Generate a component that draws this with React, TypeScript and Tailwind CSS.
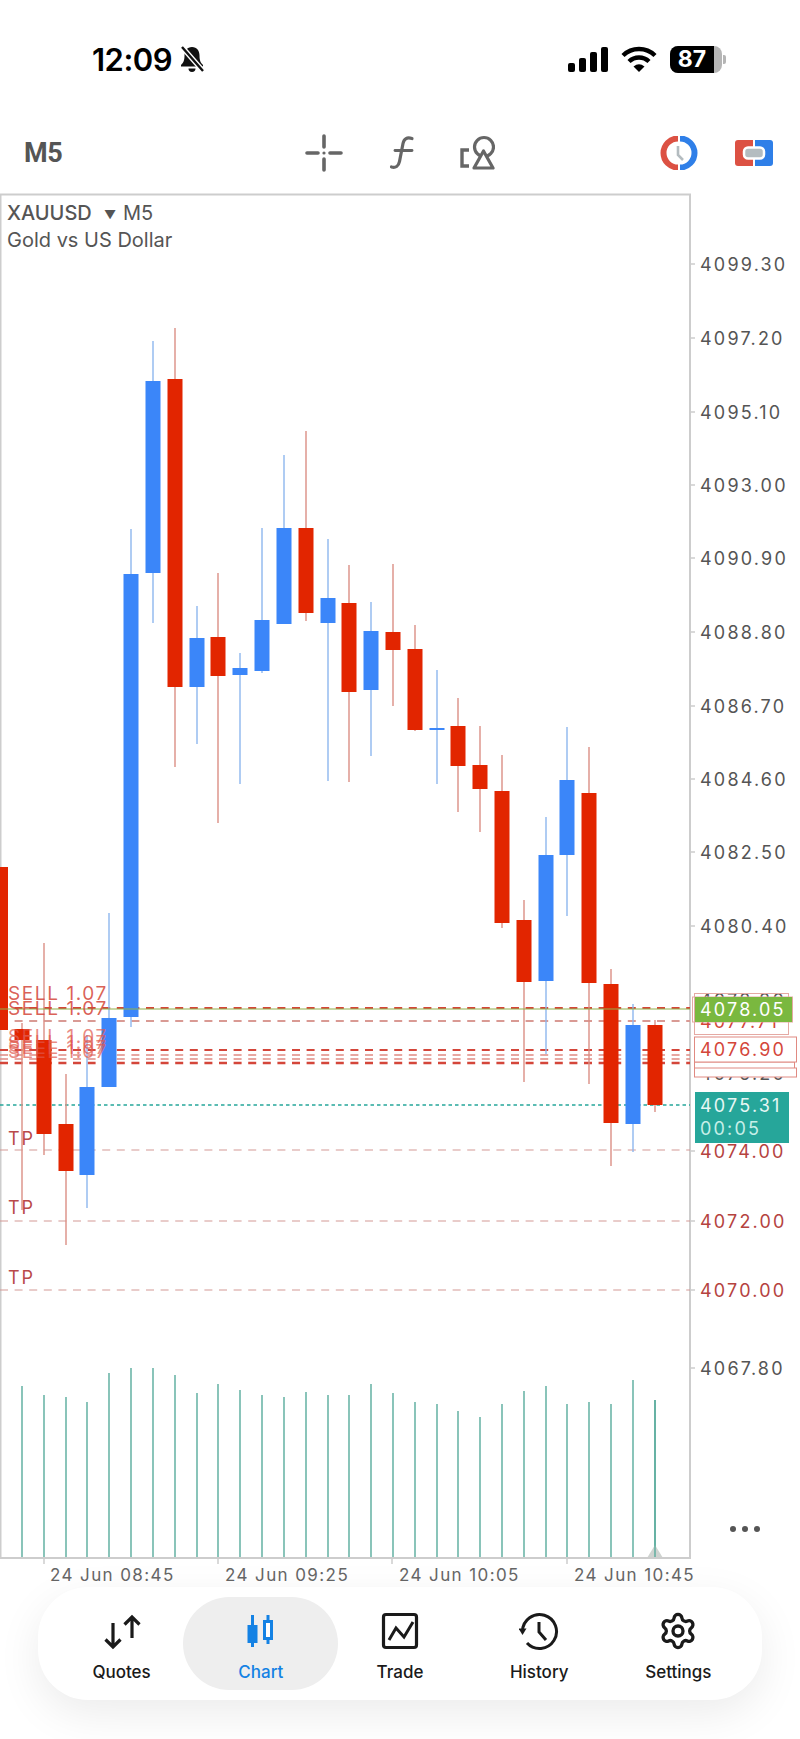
import { Settings } from 'lucide-react';

// x, wick top, wick bottom, body top, body bottom, up candle?
const candles: [number, number, number, number, number, boolean][] = [
  [1, 867, 1030, 867, 1030, false],
  [22, 1023, 1210, 1029, 1040, false],
  [44, 943, 1155, 1040, 1134, false],
  [66, 1074, 1245, 1124, 1171, false],
  [87, 1035, 1208, 1087, 1175, true],
  [109, 913, 1087, 1018, 1087, true],
  [131, 529, 1027, 574, 1017, true],
  [153, 341, 623, 381, 573, true],
  [175, 328, 767, 379, 687, false],
  [197, 606, 744, 638, 687, true],
  [218, 573, 823, 637, 676, false],
  [240, 653, 784, 668, 675, true],
  [262, 528, 673, 620, 671, true],
  [284, 455, 624, 528, 624, true],
  [306, 431, 621, 528, 613, false],
  [328, 539, 781, 598, 623, true],
  [349, 565, 782, 603, 692, false],
  [371, 602, 756, 631, 690, true],
  [393, 564, 706, 632, 650, false],
  [415, 625, 731, 649, 730, false],
  [437, 670, 784, 728, 730, true],
  [458, 698, 812, 726, 766, false],
  [480, 726, 832, 765, 789, false],
  [502, 755, 928, 791, 923, false],
  [524, 900, 1082, 920, 982, false],
  [546, 817, 1054, 855, 981, true],
  [567, 727, 916, 780, 855, true],
  [589, 747, 1084, 793, 983, false],
  [611, 969, 1166, 984, 1123, false],
  [633, 1004, 1152, 1025, 1124, true],
  [655, 1020, 1112, 1025, 1105, false],
];

const volumes: [number, number][] = [
  [22, 1386], [44, 1395], [66, 1397], [87, 1402], [109, 1373], [131, 1368], [153, 1368], [175, 1375],
  [197, 1393], [218, 1384], [240, 1390], [262, 1395], [284, 1397], [306, 1392], [328, 1395], [349, 1395],
  [371, 1384], [393, 1393], [415, 1402], [437, 1404], [458, 1411], [480, 1417], [502, 1404], [524, 1391],
  [546, 1386], [567, 1404], [589, 1402], [611, 1404], [633, 1380], [655, 1400],
];

const priceLabels: [string, number][] = [
  ['4099.30', 264], ['4097.20', 338], ['4095.10', 412], ['4093.00', 485], ['4090.90', 558],
  ['4088.80', 632], ['4086.70', 706], ['4084.60', 779], ['4082.50', 852], ['4080.40', 926], ['4067.80', 1368],
];

const timeLabels: [string, number, number][] = [
  ['24 Jun 08:45', 44, 50], ['24 Jun 09:25', 218, 225], ['24 Jun 10:05', 392, 399], ['24 Jun 10:45', 567, 574],
];

function Chart() {
  return (
    <svg viewBox="0 190 800 1397" className="block w-[800px] h-[1397px] shrink-0 font-['Inter',sans-serif]">
      {/* volumes */}
      {volumes.map(([x, y]) => (
        <line key={x} x1={x} x2={x} y1={y} y2={1558} stroke="#58ab9c" strokeWidth="1.4" />
      ))}
      <polygon points="647,1558 655,1545 663,1558" fill="#cfd3d0" />
      <line x1={655} x2={655} y1={1400} y2={1558} stroke="#58ab9c" strokeWidth="1.4" />

      {/* frame and ticks */}
      <path d="M0.5 1558 V194.5 H690 V1558 H0" fill="none" stroke="#cdcdcd" strokeWidth="2" />
      {priceLabels.map(([, y]) => (
        <line key={y} x1={690} x2={695} y1={y} y2={y} stroke="#cdcdcd" strokeWidth="1.5" />
      ))}
      {timeLabels.map(([, x]) => (
        <line key={x} x1={x} x2={x} y1={1558} y2={1564} stroke="#cdcdcd" strokeWidth="1.5" />
      ))}

      {/* order lines */}
      <line x1={0} x2={690} y1={1008} y2={1008} stroke="#d4463a" strokeWidth="2" strokeDasharray="8 6.6" />
      <line x1={0} x2={690} y1={1021} y2={1021} stroke="#d99a94" strokeWidth="2" strokeDasharray="8 6.6" />
      <line x1={0} x2={690} y1={1050} y2={1050} stroke="#d4463a" strokeWidth="2" strokeDasharray="8 6.6" />
      <line x1={0} x2={690} y1={1055} y2={1055} stroke="#e08a82" strokeWidth="1.6" strokeDasharray="8 6.6" />
      <line x1={0} x2={690} y1={1059} y2={1059} stroke="#e08a82" strokeWidth="1.6" strokeDasharray="8 6.6" />
      <line x1={0} x2={690} y1={1063} y2={1063} stroke="#d4463a" strokeWidth="2.4" strokeDasharray="8 6.6" />
      <line x1={0} x2={690} y1={1105} y2={1105} stroke="#26a69a" strokeWidth="1.6" strokeDasharray="3.5 3" />
      <line x1={0} x2={690} y1={1150} y2={1150} stroke="#d49a96" strokeWidth="1.2" strokeDasharray="8 6.6" />
      <line x1={0} x2={690} y1={1221} y2={1221} stroke="#d49a96" strokeWidth="1.2" strokeDasharray="8 6.6" />
      <line x1={0} x2={690} y1={1290} y2={1290} stroke="#d49a96" strokeWidth="1.2" strokeDasharray="8 6.6" />

      {/* candles */}
      {candles.map(([x, wt, wb, bt, bb, up]) => (
        <g key={x}>
          <line x1={x} x2={x} y1={wt} y2={wb} stroke={up ? '#8db7ee' : '#db8f85'} strokeWidth="1.4" />
          <rect x={x === 1 ? 0 : x - 7.5} y={bt} width={x === 1 ? 8 : 15} height={bb - bt} fill={up ? '#3b86f9' : '#e22500'} />
        </g>
      ))}
      <line x1={0} x2={690} y1={1009} y2={1009} stroke="#8fb04a" strokeWidth="1.2" />

      {/* symbol */}
      <text x={7} y={220} fontSize="20" fontWeight="500" fill="#555555">XAUUSD</text>
      <text x={104} y={219} fontSize="12" fill="#555555">▼</text>
      <text x={123} y={220} fontSize="20" fill="#555555">M5</text>
      <text x={7} y={247} fontSize="20" fill="#555555">Gold vs US Dollar</text>

      {/* order labels */}
      {[1000, 1015].map((y) => (
        <text key={y} x={8} y={y} fontSize="19" fill="#d4463a" fillOpacity="0.85" className="tracking-[1.6px]">SELL 1.07</text>
      ))}
      {[1043, 1049, 1054, 1058].map((y) => (
        <text key={y} x={8} y={y} fontSize="19" fill="#e0574c" fillOpacity="0.7" className="tracking-[1.6px]">SELL 1.07</text>
      ))}
      {[1145, 1214, 1284].map((y) => (
        <text key={y} x={8} y={y} fontSize="18" fill="#b94a4a" className="tracking-[2px]">TP</text>
      ))}

      {/* price axis */}
      {priceLabels.map(([label, y]) => (
        <text key={label} x={700} y={y + 6.5} fontSize="18" fill="#555555" className="tracking-[2.2px]">{label}</text>
      ))}
      <text x={700} y={1006.5} fontSize="18" fill="#555555" className="tracking-[2.2px]">4078.80</text>
      <text x={700} y={1027.5} fontSize="18" fill="#d4463a" className="tracking-[2.2px]">4077.71</text>
      <rect x={694.5} y={993.5} width={94} height={41} fill="none" stroke="#e5a9a3" strokeWidth="1" />
      <rect x={692.5} y={997} width={100} height={25} fill="none" stroke="#e5a9a3" strokeWidth="1" />
      <rect x={695} y={997} width={97} height={25} fill="#7ab83f" />
      <text x={700} y={1016} fontSize="18" fill="#ffffff" className="tracking-[2.2px]">4078.05</text>

      <text x={700} y={1080} fontSize="18" fill="#555555" className="tracking-[2.2px]">4075.20</text>
      <rect x={694.5} y={1062} width={100} height={9} fill="#ffffff" stroke="#e08a82" strokeWidth="1" />
      <rect x={694.5} y={1068} width={102} height={9} fill="#ffffff" stroke="#e08a82" strokeWidth="1" />
      <rect x={694.5} y={1037} width={102} height={25} fill="#ffffff" stroke="#e08a82" strokeWidth="1" />
      <text x={700} y={1056} fontSize="18" fill="#d4463a" className="tracking-[2.2px]">4076.90</text>

      <rect x={695} y={1092} width={94} height={51} fill="#26a69a" />
      <text x={700} y={1111.5} fontSize="18" fill="#e6f7f4" className="tracking-[2.2px]">4075.31</text>
      <text x={700} y={1134.5} fontSize="18" fill="#c6efe8" className="tracking-[2.2px]">00:05</text>

      {[['4074.00', 1151], ['4072.00', 1221], ['4070.00', 1290]].map(([label, y]) => (
        <g key={label}>
          <line x1={690} x2={695} y1={y} y2={y} stroke="#cdcdcd" strokeWidth="1.5" />
          <text x={700} y={Number(y) + 6.5} fontSize="18" fill="#b5433f" className="tracking-[2.2px]">{label}</text>
        </g>
      ))}

      {/* time axis */}
      {timeLabels.map(([label, tick, x]) => (
        <text key={tick} x={x} y={1581} fontSize="17" fill="#666666" className="tracking-[1.4px]">{label}</text>
      ))}

      <circle cx={733} cy={1529} r={3} fill="#555555" />
      <circle cx={745} cy={1529} r={3} fill="#555555" />
      <circle cx={757} cy={1529} r={3} fill="#555555" />
    </svg>
  );
}

function StatusBar() {
  return (
    <div className="flex h-[116px] shrink-0 pt-[42px] pl-[92px] pr-[74px] justify-between items-start">
      <div className="flex items-center h-[34px] gap-[6px]">
        <span className="text-[31px] leading-none font-semibold text-black tracking-[-0.5px]">12:09</span>
        <svg width="28" height="28" viewBox="0 0 28 28">
          <path d="M14 2c-5 0-7.5 4-7.5 8.5 0 5-1 7-3.5 9.5v1.5h22V20c-2.500-2.500-3.500-4.500-3.500-9.500C21.500 6 19 2 14 2z" fill="#111" />
          <path d="M10.500 23.500h7a3.500 3.500 0 0 1-7 0z" fill="#111" />
          <path d="M4 2 L25 26" stroke="#fff" strokeWidth="5" />
          <path d="M4 2 L25 26" stroke="#111" strokeWidth="2.4" />
        </svg>
      </div>
      <div className="flex items-center gap-[13px] h-[34px]">
        <div className="flex items-end gap-[4px] h-[25px]">
          <div className="w-[7px] h-[9px] rounded-[2px] bg-black" />
          <div className="w-[7px] h-[14px] rounded-[2px] bg-black" />
          <div className="w-[7px] h-[20px] rounded-[2px] bg-black" />
          <div className="w-[7px] h-[25px] rounded-[2px] bg-black" />
        </div>
        <svg width="36" height="26" viewBox="0 0 36 26">
          <path d="M2 9.500A23 23 0 0 1 34 9.500" fill="none" stroke="#000" strokeWidth="4.400" />
          <path d="M8 15.500A14.500 14.500 0 0 1 28 15.500" fill="none" stroke="#000" strokeWidth="4.400" />
          <path d="M12.500 20.500Q18 16 23.500 20.500L18 26Z" fill="#000" />
        </svg>
        <div className="flex items-center">
          <div className="flex w-[52px] h-[27px] rounded-[8px] overflow-hidden bg-[#b5b5b5]">
            <div className="w-[44px] bg-black flex items-center justify-center text-white text-[23px] font-bold leading-none">87</div>
          </div>
          <div className="w-[3px] h-[9px] ml-[1px] rounded-r-[2px] bg-[#b5b5b5]" />
        </div>
      </div>
    </div>
  );
}

function Toolbar() {
  return (
    <div className="flex h-[74px] shrink-0 items-center pl-[24px] pr-[27px]">
      <span className="font-['Roboto',sans-serif] text-[27px] font-bold leading-none text-[#555555] w-[281px] tracking-[-0.5px]">M5</span>
      <svg width="38" height="38" viewBox="0 0 38 38" className="shrink-0">
        <g stroke="#666666" strokeWidth="3.600" strokeLinecap="round">
          <path d="M19 2v11M19 25v11M2 19h11M25 19h11" />
        </g>
        <circle cx="19" cy="19" r="1.600" fill="#666666" />
      </svg>
      <svg width="28" height="36" viewBox="0 0 28 36" className="shrink-0 ml-[44px]">
        <path d="M25 3.500c-5-1.500-8 0-9 5l-3.500 18c-1 5-4 6.500-8 5.500" fill="none" stroke="#666666" strokeWidth="3.200" strokeLinecap="round" />
        <path d="M8 15.500h17" stroke="#666666" strokeWidth="2.800" strokeLinecap="round" />
      </svg>
      <svg width="36" height="36" viewBox="0 0 36 36" className="shrink-0 ml-[44px]">
        <circle cx="25" cy="12" r="9.500" fill="none" stroke="#666666" strokeWidth="3.200" />
        <path d="M24.500 16 34 33H15Z" fill="#fff" stroke="#666666" strokeWidth="3.200" strokeLinejoin="round" />
        <path d="M10 15H3v16h7" fill="none" stroke="#666666" strokeWidth="3.400" />
      </svg>
      <div className="flex-1" />
      <svg width="38" height="34" viewBox="0 0 38 34" className="shrink-0">
        <path d="M18 2.500A14.500 14.500 0 0 0 18 31.500" fill="none" stroke="#dc5143" strokeWidth="6" />
        <path d="M20 2.500A14.500 14.500 0 0 1 20 31.500" fill="none" stroke="#2f7fe8" strokeWidth="6" />
        <path d="M18 10v9l5 5" fill="none" stroke="#b4bcc0" strokeWidth="2.600" />
      </svg>
      <svg width="38" height="28" viewBox="0 0 38 28" className="shrink-0 ml-[37px]">
        <path d="M3 1h15v26H3a3 3 0 0 1-3-3V4a3 3 0 0 1 3-3z" fill="#dc5143" />
        <path d="M20 1h15a3 3 0 0 1 3 3v20a3 3 0 0 1-3 3H20z" fill="#2f7fe8" />
        <rect x="9" y="8.500" width="20" height="11" rx="4" fill="#b4bcc0" stroke="#ffffff" strokeWidth="2.500" />
      </svg>
    </div>
  );
}

function NavItem({ label, active, children }: { label: string; active?: boolean; children: React.ReactNode }) {
  return (
    <div
      className={`flex flex-col items-center pt-[14px] rounded-[48px] ${active ? 'bg-[#eeeeee] -mx-[8px]' : ''}`}
    >
      <div className="w-[40px] h-[40px] flex items-center justify-center">{children}</div>
      <span className={`mt-[10px] text-[17px] leading-[22px] font-medium ${active ? 'text-[#1482e4]' : 'text-[#1a1a1a]'}`}>
        {label}
      </span>
    </div>
  );
}

function BottomNav() {
  return (
    <div className="mx-[38px] h-[113px] shrink-0 rounded-[50px] bg-white px-[14px] py-[10px] grid grid-cols-5 shadow-[0_14px_44px_rgba(0,0,0,0.08)]">
      <NavItem label="Quotes">
        <svg width="40" height="40" viewBox="0 0 40 40">
          <path d="M11 12v24M3.500 28.500 11 36l7.500-7.500M30 6v21M22.500 13.500 30 6l7.500 7.500" fill="none" stroke="#1a1a1a" strokeWidth="3.200" />
        </svg>
      </NavItem>
      <NavItem label="Chart" active>
        <svg width="40" height="40" viewBox="0 0 40 40">
          <path d="M11.500 4v32" stroke="#1482e4" strokeWidth="3" />
          <rect x="6.500" y="14" width="10" height="18" fill="#1482e4" />
          <path d="M27 4v29" stroke="#1482e4" strokeWidth="3" />
          <rect x="23.500" y="10.500" width="7" height="17" fill="#ffffff" stroke="#1482e4" strokeWidth="3" />
        </svg>
      </NavItem>
      <NavItem label="Trade">
        <svg width="40" height="40" viewBox="0 0 40 40">
          <rect x="3.500" y="3.500" width="33" height="33" rx="2.500" fill="none" stroke="#1a1a1a" strokeWidth="3.200" />
          <path d="M9 29 16 17l8 9 9-15" fill="none" stroke="#1a1a1a" strokeWidth="3" />
        </svg>
      </NavItem>
      <NavItem label="History">
        <svg width="40" height="40" viewBox="0 0 40 40">
          <path d="M3.500 20A17 17 0 1 1 8 32" fill="none" stroke="#1a1a1a" strokeWidth="3" />
          <path d="M-0.500 17.500h8L3.500 24Z" fill="#1a1a1a" />
          <path d="M20 11v10l7 8" fill="none" stroke="#1a1a1a" strokeWidth="3" />
        </svg>
      </NavItem>
      <NavItem label="Settings">
        <Settings size={40} strokeWidth={2} color="#1a1a1a" />
      </NavItem>
    </div>
  );
}

export default function App() {
  return (
    <div className="w-[800px] h-[1739px] flex flex-col bg-white overflow-hidden font-['Inter',sans-serif]">
      <StatusBar />
      <Toolbar />
      <Chart />
      <BottomNav />
    </div>
  );
}
